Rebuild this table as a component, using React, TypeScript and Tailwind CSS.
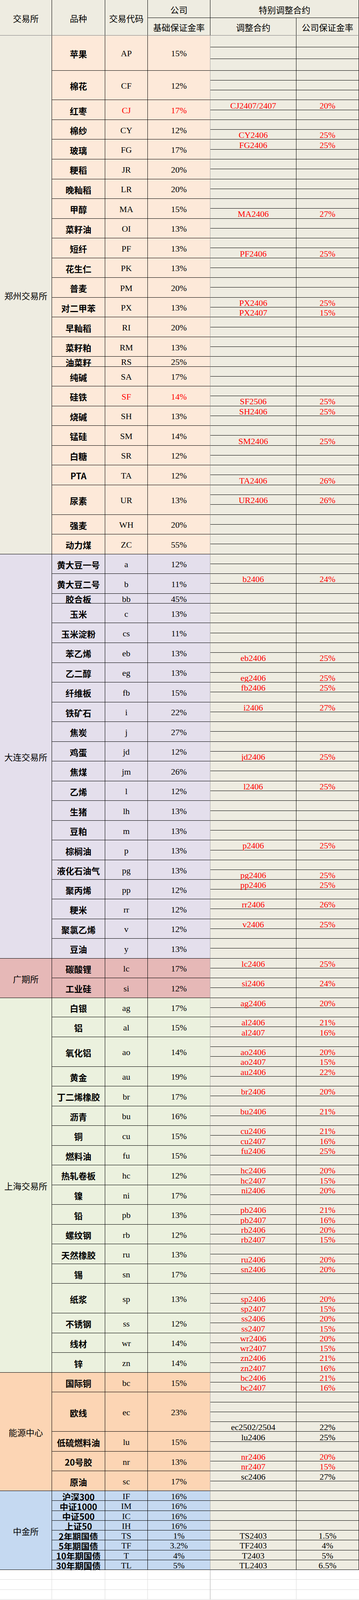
import React from 'react';

type Sub = { c?: string; r?: string; dark?: boolean; h?: string };
type Product = { name: string; code: string; rate: string; red?: boolean; subs: Sub[] };
type Exchange = { name: string; exBg: string; prodBg: string; products: Product[] };

// n empty sub rows
const e = (n: number, h?: string): Sub[] => Array.from({ length: n }, () => ({ h }));

const exchanges: Exchange[] = [
  {
    name: '郑州交易所',
    exBg: 'bg-[#EEECE1]',
    prodBg: 'bg-[#FDE9D9]',
    products: [
      { name: '苹果', code: 'AP', rate: '15%', subs: e(3, 'h-[29.95px]') },
      { name: '棉花', code: 'CF', rate: '12%', subs: e(3) },
      { name: '红枣', code: 'CJ', rate: '17%', red: true, subs: [{ c: 'CJ2407/2407', r: '20%' }, {}] },
      { name: '棉纱', code: 'CY', rate: '12%', subs: [{}, { c: 'CY2406', r: '25%' }] },
      { name: '玻璃', code: 'FG', rate: '17%', subs: [{ c: 'FG2406', r: '25%' }, {}] },
      { name: '粳稻', code: 'JR', rate: '20%', subs: e(2) },
      { name: '晚籼稻', code: 'LR', rate: '20%', subs: e(2) },
      { name: '甲醇', code: 'MA', rate: '15%', subs: [{}, { c: 'MA2406', r: '27%' }] },
      { name: '菜籽油', code: 'OI', rate: '13%', subs: e(2) },
      { name: '短纤', code: 'PF', rate: '13%', subs: [{}, { c: 'PF2406', r: '25%' }] },
      { name: '花生仁', code: 'PK', rate: '13%', subs: e(2) },
      { name: '普麦', code: 'PM', rate: '20%', subs: e(2) },
      { name: '对二甲苯', code: 'PX', rate: '13%', subs: [{ c: 'PX2406', r: '25%' }, { c: 'PX2407', r: '15%' }] },
      { name: '早籼稻', code: 'RI', rate: '20%', subs: e(2) },
      { name: '菜籽粕', code: 'RM', rate: '13%', subs: e(2) },
      { name: '油菜籽', code: 'RS', rate: '25%', subs: e(1) },
      { name: '纯碱', code: 'SA', rate: '17%', subs: e(2) },
      { name: '硅铁', code: 'SF', rate: '14%', red: true, subs: [{}, { c: 'SF2506', r: '25%' }] },
      { name: '烧碱', code: 'SH', rate: '13%', subs: [{ c: 'SH2406', r: '25%' }, {}] },
      { name: '锰硅', code: 'SM', rate: '14%', subs: [{}, { c: 'SM2406', r: '25%' }] },
      { name: '白糖', code: 'SR', rate: '12%', subs: e(2) },
      { name: 'PTA', code: 'TA', rate: '12%', subs: [{}, { c: 'TA2406', r: '26%' }] },
      { name: '尿素', code: 'UR', rate: '13%', subs: [{}, { c: 'UR2406', r: '26%' }, {}] },
      { name: '强麦', code: 'WH', rate: '20%', subs: e(2) },
      { name: '动力煤', code: 'ZC', rate: '55%', subs: e(2) },
    ],
  },
  {
    name: '大连交易所',
    exBg: 'bg-[#E4DFEC]',
    prodBg: 'bg-[#E4DFEC]',
    products: [
      { name: '黄大豆一号', code: 'a', rate: '12%', subs: e(2) },
      { name: '黄大豆二号', code: 'b', rate: '11%', subs: [{ c: 'b2406', r: '24%' }, {}] },
      { name: '胶合板', code: 'bb', rate: '45%', subs: e(1) },
      { name: '玉米', code: 'c', rate: '13%', subs: e(2) },
      { name: '玉米淀粉', code: 'cs', rate: '11%', subs: e(2) },
      { name: '苯乙烯', code: 'eb', rate: '13%', subs: [{}, { c: 'eb2406', r: '25%' }] },
      { name: '乙二醇', code: 'eg', rate: '13%', subs: [{}, { c: 'eg2406', r: '25%' }] },
      { name: '纤维板', code: 'fb', rate: '15%', subs: [{ c: 'fb2406', r: '25%' }, {}] },
      { name: '铁矿石', code: 'i', rate: '22%', subs: [{ c: 'i2406', r: '27%' }, {}] },
      { name: '焦炭', code: 'j', rate: '27%', subs: e(2) },
      { name: '鸡蛋', code: 'jd', rate: '12%', subs: [{}, { c: 'jd2406', r: '25%' }] },
      { name: '焦煤', code: 'jm', rate: '26%', subs: e(2) },
      { name: '乙烯', code: 'l', rate: '12%', subs: [{ c: 'l2406', r: '25%' }, {}] },
      { name: '生猪', code: 'lh', rate: '13%', subs: e(2) },
      { name: '豆粕', code: 'm', rate: '13%', subs: e(2) },
      { name: '棕榈油', code: 'p', rate: '13%', subs: [{ c: 'p2406', r: '25%' }, {}] },
      { name: '液化石油气', code: 'pg', rate: '13%', subs: [{}, { c: 'pg2406', r: '25%' }] },
      { name: '聚丙烯', code: 'pp', rate: '12%', subs: [{ c: 'pp2406', r: '25%', h: 'h-[24.34px]' }, {}] },
      { name: '粳米', code: 'rr', rate: '12%', subs: [{ c: 'rr2406', r: '26%' }, {}] },
      { name: '聚氯乙烯', code: 'v', rate: '12%', subs: [{ c: 'v2406', r: '25%' }, {}] },
      { name: '豆油', code: 'y', rate: '13%', subs: e(2) },
    ],
  },
  {
    name: '广期所',
    exBg: 'bg-[#E6B8B7]',
    prodBg: 'bg-[#E6B8B7]',
    products: [
      { name: '碳酸锂', code: 'lc', rate: '17%', subs: [{ c: 'lc2406', r: '25%' }, {}] },
      { name: '工业硅', code: 'si', rate: '12%', subs: [{ c: 'si2406', r: '24%' }, {}] },
    ],
  },
  {
    name: '上海交易所',
    exBg: 'bg-[#EBF1DE]',
    prodBg: 'bg-[#EBF1DE]',
    products: [
      { name: '白银', code: 'ag', rate: '17%', subs: [{ c: 'ag2406', r: '20%' }, { h: 'h-[24.34px]' }] },
      { name: '铝', code: 'al', rate: '15%', subs: [{ c: 'al2406', r: '21%' }, { c: 'al2407', r: '16%' }] },
      { name: '氧化铝', code: 'ao', rate: '14%', subs: [{}, { c: 'ao2406', r: '20%' }, { c: 'ao2407', r: '15%' }] },
      { name: '黄金', code: 'au', rate: '19%', subs: [{ c: 'au2406', r: '22%' }, {}] },
      { name: '丁二烯橡胶', code: 'br', rate: '17%', subs: [{ c: 'br2406', r: '20%' }, {}] },
      { name: '沥青', code: 'bu', rate: '16%', subs: [{ c: 'bu2406', r: '21%' }, {}] },
      { name: '铜', code: 'cu', rate: '15%', subs: [{ c: 'cu2406', r: '21%' }, { c: 'cu2407', r: '16%' }] },
      { name: '燃料油', code: 'fu', rate: '15%', subs: [{ c: 'fu2406', r: '25%' }, {}] },
      { name: '热轧卷板', code: 'hc', rate: '12%', subs: [{ c: 'hc2406', r: '20%' }, { c: 'hc2407', r: '15%' }] },
      { name: '镍', code: 'ni', rate: '17%', subs: [{ c: 'ni2406', r: '20%' }, {}] },
      { name: '铅', code: 'pb', rate: '13%', subs: [{ c: 'pb2406', r: '21%' }, { c: 'pb2407', r: '16%' }] },
      { name: '螺纹钢', code: 'rb', rate: '12%', subs: [{ c: 'rb2406', r: '20%' }, { c: 'rb2407', r: '15%' }] },
      { name: '天然橡胶', code: 'ru', rate: '13%', subs: [{}, { c: 'ru2406', r: '20%' }] },
      { name: '锡', code: 'sn', rate: '17%', subs: [{ c: 'sn2406', r: '20%' }, {}] },
      { name: '纸浆', code: 'sp', rate: '13%', subs: [{}, { c: 'sp2406', r: '20%' }, { c: 'sp2407', r: '15%' }] },
      { name: '不锈钢', code: 'ss', rate: '12%', subs: [{ c: 'ss2406', r: '20%' }, { c: 'ss2407', r: '15%' }] },
      { name: '线材', code: 'wr', rate: '14%', subs: [{ c: 'wr2406', r: '20%' }, { c: 'wr2407', r: '15%' }] },
      { name: '锌', code: 'zn', rate: '14%', subs: [{ c: 'zn2406', r: '21%' }, { c: 'zn2407', r: '16%' }] },
    ],
  },
  {
    name: '能源中心',
    exBg: 'bg-[#FCD5B4]',
    prodBg: 'bg-[#FCD5B4]',
    products: [
      { name: '国际铜', code: 'bc', rate: '15%', subs: [{ c: 'bc2406', r: '21%' }, { c: 'bc2407', r: '16%' }] },
      { name: '欧线', code: 'ec', rate: '23%', subs: [{}, {}, {}, { c: 'ec2502/2504', r: '22%', dark: true }] },
      { name: '低硫燃料油', code: 'lu', rate: '15%', subs: [{ c: 'lu2406', r: '25%', dark: true }, {}] },
      { name: '20号胶', code: 'nr', rate: '13%', subs: [{ c: 'nr2406', r: '20%' }, { c: 'nr2407', r: '15%' }] },
      { name: '原油', code: 'sc', rate: '17%', subs: [{ c: 'sc2406', r: '27%', dark: true }, {}] },
    ],
  },
  {
    name: '中金所',
    exBg: 'bg-[#C5D9F1]',
    prodBg: 'bg-[#C5D9F1]',
    products: [
      { name: '沪深300', code: 'IF', rate: '16%', subs: e(1) },
      { name: '中证1000', code: 'IM', rate: '16%', subs: e(1) },
      { name: '中证500', code: 'IC', rate: '16%', subs: e(1) },
      { name: '上证50', code: 'IH', rate: '16%', subs: e(1) },
      { name: '2年期国债', code: 'TS', rate: '1%', subs: [{ c: 'TS2403', r: '1.5%', dark: true }] },
      { name: '5年期国债', code: 'TF', rate: '3.2%', subs: [{ c: 'TF2403', r: '4%', dark: true }] },
      { name: '10年期国债', code: 'T', rate: '4%', subs: [{ c: 'T2403', r: '5%', dark: true }] },
      { name: '30年期国债', code: 'TL', rate: '5%', subs: [{ c: 'TL2403', r: '6.5%', dark: true }] },
    ],
  },
];

function SubRow({ sub }: { sub: Sub }) {
  const color = sub.dark ? 'text-black' : 'text-[#FF0000]';
  return (
    <div className={`flex ${sub.h ?? 'h-[25.27px]'}`}>
      <div className={`w-[220px] border-r border-b border-black flex items-center justify-center pt-[4px] leading-[18px] ${color}`}>
        {sub.c}
      </div>
      <div className={`w-[160px] border-r border-b border-black flex items-center justify-center pt-[4px] leading-[18px] ${color}`}>
        {sub.r}
      </div>
    </div>
  );
}

function ProductRow({ p, bg }: { p: Product; bg: string }) {
  const codeColor = p.red ? 'text-[#FF0000]' : 'text-black';
  return (
    <div className="flex">
      <div className={`w-[136px] ${bg} border-r border-b border-black flex items-center justify-center pt-[3px] leading-[18px] font-['Noto_Sans_CJK_SC',sans-serif] font-bold`}>
        {p.name}
      </div>
      <div className={`w-[109px] ${bg} ${codeColor} border-r border-b border-black flex items-center justify-center pt-[4px] leading-[18px]`}>
        {p.code}
      </div>
      <div className={`w-[160px] ${bg} ${codeColor} border-r border-b border-black border-r-[#A6A6A6] flex items-center justify-center pt-[4px] leading-[18px]`}>
        {p.rate}
      </div>
      <div className="w-[380px] flex flex-col bg-[#EEECE1]">
        {p.subs.map((s, i) => (
          <SubRow key={i} sub={s} />
        ))}
      </div>
    </div>
  );
}

export default function App() {
  return (
    <div className="w-[918px] bg-white text-black text-[22px] font-['Liberation_Serif','Noto_Sans_CJK_SC',serif]">
      {/* Header */}
      <div className="flex h-[90.79px] bg-[#EEECE1] border-b border-[#808080] font-['Noto_Sans_CJK_SC',sans-serif] leading-[18px]">
        <div className="w-[133px] border-r border-black flex items-center justify-center pt-[3px]">交易所</div>
        <div className="w-[136px] border-r border-black flex items-center justify-center pt-[3px]">品种</div>
        <div className="w-[109px] border-r border-black flex items-center justify-center pt-[3px]">交易代码</div>
        <div className="w-[540px] flex flex-col">
          <div className="h-[45.86px] flex border-b border-black">
            <div className="w-[160px] border-r border-black flex items-center justify-center pt-[3px]">公司</div>
            <div className="w-[380px] border-r border-black flex items-center justify-center pt-[3px]">特别调整合约</div>
          </div>
          <div className="flex flex-1">
            <div className="w-[160px] border-r border-black flex items-center justify-center pt-[3px]">基础保证金率</div>
            <div className="w-[220px] border-r border-black flex items-center justify-center pt-[3px]">调整合约</div>
            <div className="w-[160px] border-r border-black flex items-center justify-center pt-[3px]">公司保证金率</div>
          </div>
        </div>
      </div>

      {/* Exchanges */}
      {exchanges.map((ex) => (
        <div key={ex.name} className="flex">
          <div className={`w-[133px] ${ex.exBg} border-r border-b border-black flex items-center justify-center pt-[3px] leading-[18px] font-['Noto_Sans_CJK_SC',sans-serif]`}>
            {ex.name}
          </div>
          <div className="w-[785px] flex flex-col">
            {ex.products.map((p) => (
              <ProductRow key={p.code} p={p} bg={ex.prodBg} />
            ))}
          </div>
        </div>
      ))}

      {/* Empty sheet rows below the table */}
      {[0, 1, 2].map((i) => (
        <div key={i} className="flex h-[25.27px]">
          <div className="w-[133px] border-r border-b border-[#D9D9D9]" />
          <div className="w-[136px] border-r border-b border-[#D9D9D9]" />
          <div className="w-[109px] border-r border-b border-[#D9D9D9]" />
          <div className="w-[160px] border-r border-b border-[#D9D9D9] border-r-[#A6A6A6]" />
          <div className="w-[220px] border-r border-b border-[#D9D9D9]" />
          <div className="w-[160px] border-b border-[#D9D9D9]" />
        </div>
      ))}
    </div>
  );
}
